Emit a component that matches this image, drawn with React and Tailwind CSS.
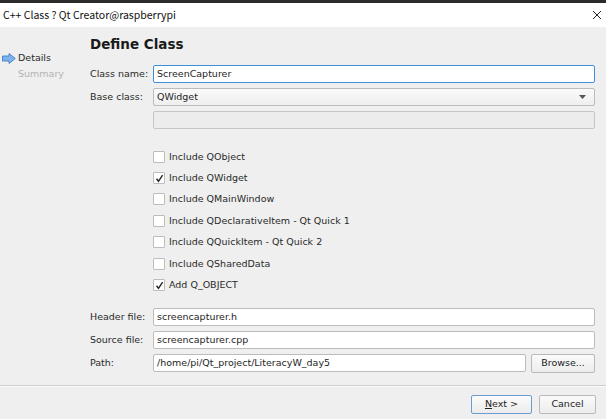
import { useState } from 'react';

const font = { fontFamily: '"DejaVu Sans", sans-serif' };

function Field({ value, focused, className = '' }) {
  return (
    <div
      className={`h-[18px] flex items-center px-[3px] bg-white rounded-[2px] border ${
        focused ? 'border-[#3c8fdd]' : 'border-[#bcbcbc]'
      } ${className}`}
    >
      <span className="text-[9.5px] text-[#1e1e1e] leading-none whitespace-nowrap">{value}</span>
    </div>
  );
}

function Check({ label, checked }) {
  return (
    <div className="h-[21.4px] flex items-center gap-[4px]">
      <div className="w-[12px] h-[12px] bg-white border border-[#bdbdbd] rounded-[1px] flex items-center justify-center">
        {checked && (
          <svg width="9" height="9" viewBox="0 0 9 9">
            <path d="M1.5 4.8 L3.5 7.3 L7.6 1.2" fill="none" stroke="#222" strokeWidth="1.4" />
          </svg>
        )}
      </div>
      <span className="text-[9.5px] text-[#2a2a2a] whitespace-nowrap">{label}</span>
    </div>
  );
}

function Button({ children, primary, className = '' }) {
  return (
    <button
      type="button"
      className={`h-[19px] rounded-[2px] border bg-gradient-to-b from-[#fbfbfb] to-[#ececec] text-[9.5px] text-[#222] flex items-center justify-center ${
        primary ? 'border-[#6c9bd0]' : 'border-[#b9b9b9]'
      } ${className}`}
    >
      {children}
    </button>
  );
}

export default function App() {
  const [checks] = useState([
    ['Include QObject', false],
    ['Include QWidget', true],
    ['Include QMainWindow', false],
    ['Include QDeclarativeItem - Qt Quick 1', false],
    ['Include QQuickItem - Qt Quick 2', false],
    ['Include QSharedData', false],
    ['Add Q_OBJECT', true],
  ]);

  return (
    <div className="w-[606px] h-[419px] flex flex-col overflow-hidden" style={font}>
      <div className="h-[3px] bg-[#2b2b2b]" />
      <div className="h-[24px] bg-white flex items-center justify-between pl-[3px] pr-[4px]">
        <span
          className="text-[10.5px] text-[#111]"
          style={{ fontFamily: '"Noto Sans CJK KR", "Noto Sans", sans-serif' }}
        >
          C++ Class ? Qt Creator@raspberrypi
        </span>
        <svg width="10" height="10" viewBox="0 0 10 10">
          <path d="M1 1 L9 9 M9 1 L1 9" stroke="#222" strokeWidth="1" />
        </svg>
      </div>

      <div className="flex-1 bg-[#efefef] flex flex-col">
        <div className="flex-1 flex">
          <div className="w-[90px] pt-[23px] pl-[2px]">
            <div className="flex items-center gap-[2px] h-[16px]">
              <svg width="14" height="11" viewBox="0 0 14 11">
                <path d="M0.5 3 H7 V0.5 L13.3 5.5 L7 10.5 V8 H0.5 Z" fill="#7fb2ea" stroke="#3f7fcf" strokeWidth="0.9" />
              </svg>
              <span className="text-[9.5px] text-[#2a2a2a]">Details</span>
            </div>
            <div className="h-[16px] pl-[16px] flex items-center">
              <span className="text-[9.5px] text-[#b3b3b3]">Summary</span>
            </div>
          </div>

          <div className="flex-1 pr-[11px] pt-[8px] flex flex-col">
            <div className="text-[13.5px] font-bold text-[#1a1a1a] leading-[18px]">Define Class</div>

            <div className="mt-[12px] grid grid-cols-[63px_1fr] gap-y-[5px] items-center">
              <span className="text-[9.5px] text-[#2a2a2a]">Class name:</span>
              <Field value="ScreenCapturer" focused />
              <span className="text-[9.5px] text-[#2a2a2a]">Base class:</span>
              <div className="h-[18px] flex items-center justify-between px-[3px] rounded-[2px] border border-[#bcbcbc] bg-gradient-to-b from-[#fafafa] to-[#efefef]">
                <span className="text-[9.5px] text-[#1e1e1e]">QWidget</span>
                <svg width="7" height="4" viewBox="0 0 7 4" className="mr-[5px]">
                  <path d="M0 0 H7 L3.5 4 Z" fill="#555" />
                </svg>
              </div>
              <span />
              <div className="h-[18px] rounded-[2px] border border-[#c6c6c6] bg-[#ececec]" />
            </div>

            <div className="mt-[17px] pl-[63px] flex flex-col">
              {checks.map(([label, checked]) => (
                <Check key={label} label={label} checked={checked} />
              ))}
            </div>

            <div className="mt-[12px] grid grid-cols-[63px_1fr] gap-y-[5px] items-center">
              <span className="text-[9.5px] text-[#2a2a2a]">Header file:</span>
              <Field value="screencapturer.h" />
              <span className="text-[9.5px] text-[#2a2a2a]">Source file:</span>
              <Field value="screencapturer.cpp" />
              <span className="text-[9.5px] text-[#2a2a2a]">Path:</span>
              <div className="flex gap-[5px]">
                <Field value="/home/pi/Qt_project/LiteracyW_day5" className="flex-1" />
                <Button className="w-[64px]">Browse...</Button>
              </div>
            </div>
          </div>
        </div>

        <div className="h-[1px] bg-[#cfcfcf]" />
        <div className="h-[1px] bg-[#fafafa]" />
        <div className="h-[32px] flex items-start justify-end gap-[7px] pt-[8px] pr-[10px]">
          <Button primary className="w-[61px]">
            <span className="underline">N</span>ext &gt;
          </Button>
          <Button className="w-[57px]">Cancel</Button>
        </div>
      </div>
    </div>
  );
}
